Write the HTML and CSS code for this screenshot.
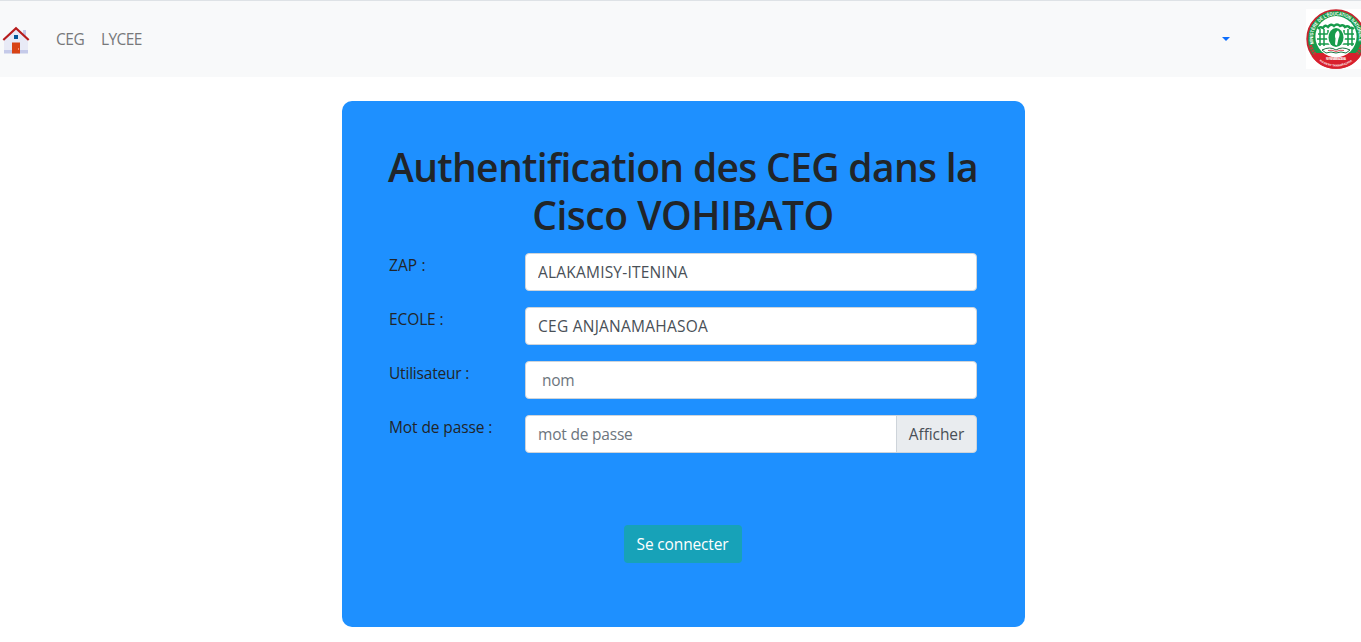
FILE: index.html
```html
<!DOCTYPE html>
<html lang="fr">
<head>
<meta charset="utf-8">
<title>Authentification</title>
<link rel="stylesheet" href="styles.css">
</head>
<body>
<nav class="navbar">
  <a class="home" href="#" aria-label="Accueil">
    <svg width="32" height="32" viewBox="0 0 32 32">
      <path fill="#c5cae9" d="M23 7h3v10h-3z"/>
      <path fill="#e8eaf6" d="M4 16 16 6l12 10v11H4z"/>
      <path fill="#c5cae9" d="M4 27h24v3.500H4z"/>
      <path fill="#d84315" d="M12 19.500h8v11h-8z"/>
      <path fill="#01579b" d="M14 12h4v4h-4z"/>
      <path fill="none" stroke="#b71c1c" stroke-width="2.200" d="M3.300 17 16 5.300 28.700 17"/>
      <path fill="#ff8a65" d="M18 25h1v2h-1z"/>
    </svg>
  </a>
  <a class="nav-link ceg" href="#">CEG</a>
  <a class="nav-link lycee" href="#">LYCEE</a>
  <button class="dropdown" aria-label="Menu"><span class="caret"></span></button>
  <svg class="emblem" width="60" height="60" viewBox="0 0 60 60">
    <defs>
      <path id="ring-top" d="M8 36A23 23 0 1 1 52 36"/>
      <path id="ring-low" d="M9 47.500A27 27 0 0 0 51 47.500"/>
    </defs>
    <rect width="60" height="60" fill="#fff"/>
    <circle cx="30" cy="30" r="28.800" fill="#169b4b" stroke="#c8242f" stroke-width="1.800"/>
    <path fill="none" stroke="#d8202d" stroke-width="6" d="M8 45.500A27 27 0 0 0 52 45.500"/>
    <path fill="#d8202d" d="M9 44H51L48 51Q30 60 12 51z"/>
    <path fill="none" stroke="#c83a35" stroke-width="3" stroke-dasharray="2 .7" d="M4.500 36Q6 41 9 45M55.500 36Q54 41 51 45"/>
    <circle cx="30" cy="27.700" r="20.600" fill="#fff"/>
    <text class="ring-text"><textPath href="#ring-top" startOffset="1" textLength="81" lengthAdjust="spacingAndGlyphs">MINISTÈRE DE L'ÉDUCATION NATIONALE</textPath></text>
    <g fill="none" stroke="#169b4b">
      <path stroke-width="2.400" d="M12 20q2-3 5-1 2-4 5-1 3-4 6-1 3-3 6 0 3-2 5 1 3-2 5 1 2-1 4 1"/>
      <path stroke-width="1.500" d="M12 25h12M36 25h12M11 30h12M37 30h12M12 35h12M36 35h12"/>
      <path stroke-width="1.500" d="M14 20v17M18 20v17M22 21v4M38 21v4M42 20v17M46 20v17"/>
    </g>
    <ellipse cx="30" cy="29" rx="9" ry="9.800" fill="#fff"/>
    <ellipse cx="30" cy="28.500" rx="7.500" ry="9.500" fill="#169b4b"/>
    <path fill="#fff" d="M32 21.500c2 2 2 5 .5 8l-1.500 7-2-1 .5-6c-1-3-.5-6 2.500-8z"/>
    <path fill="#fff" stroke="#1b7542" stroke-width="1" d="M16 41q8-4 14 0 6-4 14 0l-4 3q-5-2-10 0-5-2-10 0z"/>
    <path fill="none" stroke="#d8202d" stroke-width=".8" d="M22 41.500q4-1 8 1 4-2 8-1"/>
    <text class="ribbon-text" x="20" y="51.300" textLength="20">NY FANABEAZANA</text>
    <text class="ribbon-text"><textPath href="#ring-low" startOffset="6.500" textLength="35" lengthAdjust="spacingAndGlyphs">HO AN'NY TANINDRAZANA</textPath></text>
  </svg>
</nav>
<main class="panel">
  <h1 class="title"><span class="line-a">Authentification des CEG dans la</span><br><span class="line-b">Cisco VOHIBATO</span></h1>
  <form class="form">
    <label class="label l1" for="zap">ZAP :</label>
    <input class="control c1" id="zap" value="ALAKAMISY-ITENINA">
    <label class="label l2" for="ecole">ECOLE :</label>
    <input class="control c2" id="ecole" value="CEG ANJANAMAHASOA">
    <label class="label l3" for="user">Utilisateur :</label>
    <input class="control c3" id="user" placeholder="nom">
    <label class="label l4" for="pass">Mot de passe :</label>
    <div class="group"><input class="control c4" id="pass" type="password" placeholder="mot de passe"><span class="addon">Afficher</span></div>
  </form>
  <button class="submit">Se connecter</button>
</main>
</body>
</html>
```
FILE: styles.css
```css
* { box-sizing: border-box; }
body { margin: 0; overflow: hidden; background: #fff; color: #212529; font: 16px/24px "Open Sans", "Noto Sans", sans-serif; }
input, button { font: inherit; }
.navbar { height: 77px; background: #f8f9fa; border-top: 1px solid #dee2e6; display: flex; align-items: center; }
.home { width: 32px; height: 32px; margin-right: 24px; }
.home svg { display: block; }
.nav-link { color: #77787a; text-decoration: none; font-size: 15.500px; white-space: nowrap; }
.ceg { width: 45px; letter-spacing: -.5px; }
.lycee { letter-spacing: -.6px; }
.dropdown { margin-left: auto; margin-right: 76px; padding: 0; border: 0; background: none; display: flex; }
.caret { border: 4.500px solid transparent; border-top-color: #0d6efd; border-bottom: 0; }
.emblem { flex: none; margin-right: -5px; }
.ring-text { font: bold 5px "Liberation Sans", sans-serif; fill: #fff; }
.ribbon-text { font: bold 2.800px "Liberation Sans", sans-serif; fill: #fff; }
.panel { width: 683px; height: 526px; margin: 24px 0 0 342px; padding: 42px 48px 0 47px; border-radius: 10px; background: #1e90ff; display: flex; flex-direction: column; align-items: center; }
.title { margin: 0 -20px 14px; font-size: 39px; line-height: 48px; font-weight: 600; text-align: center; white-space: nowrap; }
.line-a { letter-spacing: -.67px; }
.line-b { letter-spacing: -.48px; }
.form { width: 588px; display: grid; grid-template-columns: 136px 452px; row-gap: 16px; }
.label { font-size: 15.500px; white-space: nowrap; letter-spacing: -.1px; }
.l1 { letter-spacing: .1px; }
.l3 { letter-spacing: -.2px; }
.control { width: 100%; min-width: 0; height: 38px; padding: 6px 12px; border: 1px solid #ced4da; border-radius: 4px; background: #fff; color: #495057; font-size: 15.500px; letter-spacing: .2px; }
.control::placeholder { color: #6c757d; opacity: 1; }
.c2 { letter-spacing: .25px; }
.c3 { padding-left: 16px; letter-spacing: -.3px; }
.group { display: flex; }
.c4 { width: 372px; border-radius: 4px 0 0 4px; letter-spacing: -.2px; }
.addon { width: 81px; margin-left: -1px; height: 38px; padding: 6px 0; text-align: center; border: 1px solid #ced4da; border-radius: 0 4px 4px 0; background: #e9ecef; color: #495057; font-size: 15.500px; letter-spacing: -.1px; }
.submit { width: 118px; height: 38px; margin: 72px 1px 0 0; padding: 0; border: 0; border-radius: 4px; background: #17a2b8; color: #fff; font-size: 15.500px; letter-spacing: -.15px; white-space: nowrap; }
```
